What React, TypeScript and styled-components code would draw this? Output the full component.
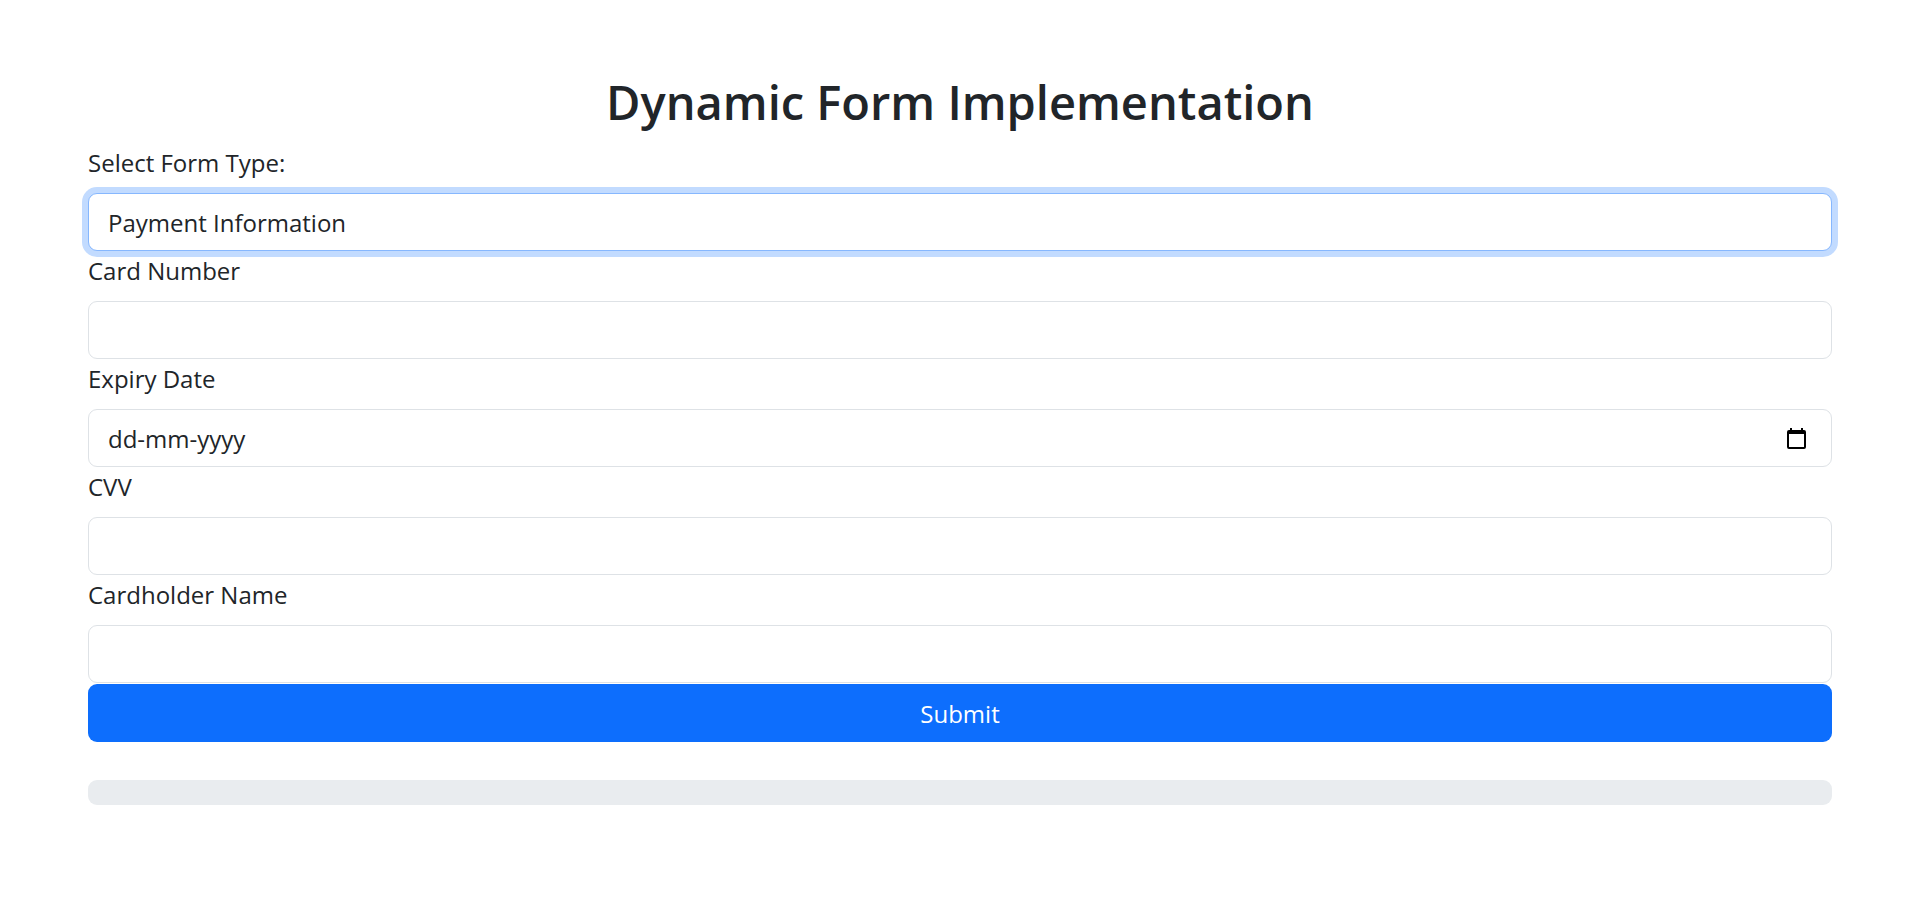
import React, { useState } from "react";
import styled, { createGlobalStyle, css } from "styled-components";

const GlobalStyle = createGlobalStyle`
  *, *::before, *::after { box-sizing: border-box; }
  body {
    margin: 0;
    background: #fff;
    color: #212529;
    font-family: "Segoe UI", "Open Sans", "Noto Sans", sans-serif;
    font-size: 24px;
    line-height: 36px;
  }
`;

const Page = styled.main`
  padding: 72px 88px;
`;

const Title = styled.h1`
  margin: 0 0 11px;
  font-size: 47px;
  font-weight: 600;
  line-height: 60px;
  text-align: center;
`;

const Form = styled.form`
  display: flex;
  flex-direction: column;
`;

const Field = styled.div`
  display: flex;
  flex-direction: column;
`;

const Label = styled.label`
  padding-bottom: 11px;
  line-height: 39px;
`;

const control = css`
  width: 100%;
  height: 58px;
  padding: 2px 19px 0;
  border: 1px solid #dee2e6;
  border-radius: 9px;
  outline: 0;
  background: #fff;
  color: #212529;
  font: inherit;
`;

const focusRing = css`
  border-color: #86b7fe;
  box-shadow: 0 0 0 6px #c2dbff;
`;

const Select = styled.select`
  ${control}
  appearance: none;
  &:focus {
    ${focusRing}
  }
`;

const TextInput = styled.input`
  ${control}
  &:focus {
    ${focusRing}
  }
`;

const DateBox = styled.div`
  ${control}
  display: flex;
  align-items: center;
  padding-right: 25px;
  &:focus-within {
    ${focusRing}
  }
`;

const DateInput = styled.input`
  flex: 1;
  min-width: 0;
  padding: 0;
  border: 0;
  outline: 0;
  background: none;
  color: inherit;
  font: inherit;
  &::placeholder {
    color: #212529;
    opacity: 1;
  }
`;

const CalendarButton = styled.button`
  display: flex;
  padding: 0 0 2px;
  border: 0;
  background: none;
  color: #000;
  cursor: pointer;
`;

const SubmitButton = styled.button`
  width: 100%;
  height: 58px;
  margin-top: 1px;
  padding: 1px 0 0;
  border: 0;
  border-radius: 9px;
  background: #0d6efd;
  color: #fff;
  font: inherit;
  cursor: pointer;
`;

const Progress = styled.div`
  height: 25px;
  margin-top: 38px;
  overflow: hidden;
  border-radius: 9px;
  background: #e9ecef;
`;

const ProgressFill = styled.div`
  height: 100%;
  background: #0d6efd;
`;

const CalendarIcon = () => (
  <svg width="19" height="21" viewBox="0 0 19 21" aria-hidden="true">
    <path
      fill="currentColor"
      fillRule="evenodd"
      d="M3 0H5V2H14V0H16V2H17Q19 2 19 4V19Q19 21 17 21H2Q0 21 0 19V4Q0 2 2 2H3ZM2 6V19H17V6Z"
    />
  </svg>
);

type FieldName = "cardNumber" | "expiryDate" | "cvv" | "cardholderName";

const fields: { name: FieldName; label: string; date?: boolean }[] = [
  { name: "cardNumber", label: "Card Number" },
  { name: "expiryDate", label: "Expiry Date", date: true },
  { name: "cvv", label: "CVV" },
  { name: "cardholderName", label: "Cardholder Name" },
];

export default function App() {
  const [values, setValues] = useState<Record<FieldName, string>>({
    cardNumber: "",
    expiryDate: "",
    cvv: "",
    cardholderName: "",
  });
  const filled = fields.filter((f) => values[f.name] !== "").length;
  const percent = (filled / fields.length) * 100;

  return (
    <>
      <GlobalStyle />
      <Page>
        <Title>Dynamic Form Implementation</Title>
        <Form onSubmit={(e) => e.preventDefault()}>
          <Field>
            <Label htmlFor="formType">Select Form Type:</Label>
            <Select id="formType" autoFocus>
              <option>Payment Information</option>
            </Select>
          </Field>
          {fields.map(({ name, label, date }) => {
            const props = {
              id: name,
              type: "text",
              value: values[name],
              onChange: (e: React.ChangeEvent<HTMLInputElement>) =>
                setValues({ ...values, [name]: e.target.value }),
            };
            return (
              <Field key={name}>
                <Label htmlFor={name}>{label}</Label>
                {date ? (
                  <DateBox>
                    <DateInput {...props} placeholder="dd-mm-yyyy" />
                    <CalendarButton type="button" aria-label="Choose date">
                      <CalendarIcon />
                    </CalendarButton>
                  </DateBox>
                ) : (
                  <TextInput {...props} />
                )}
              </Field>
            );
          })}
          <SubmitButton type="submit">Submit</SubmitButton>
        </Form>
        <Progress role="progressbar" aria-label="Form progress" aria-valuenow={percent}>
          <ProgressFill style={{ width: `${percent}%` }} />
        </Progress>
      </Page>
    </>
  );
}
